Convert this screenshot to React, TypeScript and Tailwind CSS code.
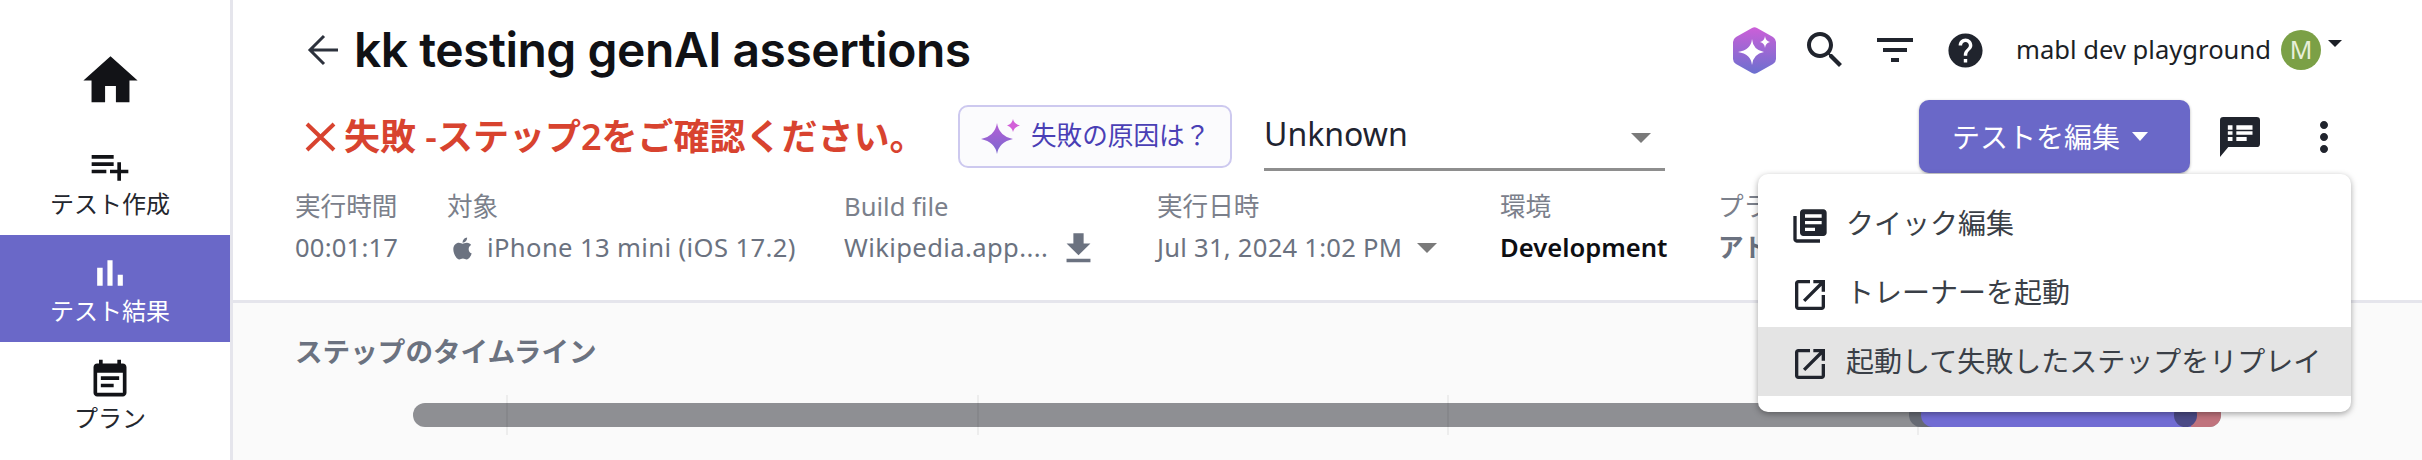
import { FaApple } from 'react-icons/fa';

const FONT = "font-['Noto_Sans','Noto_Sans_CJK_JP',sans-serif]";

function MuiIcon({ d, size, className = '' }: { d: string; size: number; className?: string }) {
  return (
    <svg width={size} height={size} viewBox="0 0 24 24" fill="currentColor" className={`shrink-0 ${className}`}>
      <path d={d} />
    </svg>
  );
}

const ICONS = {
  home: 'M10 20v-6h4v6h5v-8h3L12 3 2 12h3v8z',
  playlistAdd: 'M14 10H2v2h12v-2zm0-4H2v2h12V6zm4 8v-4h-2v4h-4v2h4v4h2v-4h4v-2h-4zM2 16h8v-2H2v2z',
  barChart: 'M5 9.2h3V19H5zM10.6 5h2.8v14h-2.8zm5.6 8H19v6h-2.8z',
  eventNote:
    'M17 10H7v2h10v-2zm2-7h-1V1h-2v2H8V1H6v2H5c-1.11 0-1.99.9-1.99 2L3 19c0 1.1.89 2 2 2h14c1.1 0 2-.9 2-2V5c0-1.1-.9-2-2-2zm0 16H5V8h14v11zm-5-5H7v2h7v-2z',
  search:
    'M15.5 14h-.79l-.28-.27C15.41 12.59 16 11.11 16 9.5 16 5.91 13.09 3 9.5 3S3 5.91 3 9.5 5.91 16 9.5 16c1.61 0 3.09-.59 4.23-1.57l.27.28v.79l5 4.99L20.49 19l-4.99-5zm-6 0C7.01 14 5 11.99 5 9.5S7.01 5 9.5 5 14 7.01 14 9.5 11.99 14 9.5 14z',
  filter: 'M10 18h4v-2h-4v2zM3 6v2h18V6H3zm3 7h12v-2H6v2z',
  help: 'M12 2C6.48 2 2 6.48 2 12s4.48 10 10 10 10-4.48 10-10S17.52 2 12 2zm1 17h-2v-2h2v2zm2.07-7.75l-.9.92C13.45 12.9 13 13.5 13 15h-2v-.5c0-1.1.45-2.1 1.17-2.83l1.24-1.26c.37-.36.59-.86.59-1.41 0-1.1-.9-2-2-2s-2 .9-2 2H8c0-2.21 1.79-4 4-4s4 1.79 4 4c0 .88-.36 1.68-.93 2.25z',
  moreVert:
    'M12 8c1.1 0 2-.9 2-2s-.9-2-2-2-2 .9-2 2 .9 2 2 2zm0 2c-1.1 0-2 .9-2 2s.9 2 2 2 2-.9 2-2-.9-2-2-2zm0 6c-1.1 0-2 .9-2 2s.9 2 2 2 2-.9 2-2-.9-2-2-2z',
  download: 'M19 9h-4V3H9v6H5l7 7 7-7zM5 18v2h14v-2H5z',
  library:
    'M4 6H2v14c0 1.1.9 2 2 2h14v-2H4V6zm16-4H8c-1.1 0-2 .9-2 2v12c0 1.1.9 2 2 2h12c1.1 0 2-.9 2-2V4c0-1.1-.9-2-2-2zm-1 9H9V9h10v2zm-4 4H9v-2h6v2zm4-8H9V5h10v2z',
  openNew:
    'M19 19H5V5h7V3H5c-1.11 0-2 .9-2 2v14c0 1.1.89 2 2 2h14c1.1 0 2-.9 2-2v-7h-2v7zM14 3v2h3.59l-9.83 9.83 1.41 1.41L19 6.41V10h2V3h-7z',
};

function Triangle({ className }: { className: string }) {
  return <span className={`shrink-0 border-x-transparent border-b-0 border-solid ${className}`} />;
}

function Sidebar() {
  return (
    <aside className="flex w-[233px] shrink-0 flex-col border-r-[3px] border-[#e5e5ec] bg-white text-[24px] leading-[24px] text-[#24272e]">
      <div className="flex h-[144px] flex-col items-center pr-[10px] pt-[48px]">
        <MuiIcon d={ICONS.home} size={65} className="text-[#121317]" />
      </div>
      <div className="flex h-[91px] flex-col items-center gap-1 pr-[10px]">
        <MuiIcon d={ICONS.playlistAdd} size={44} className="text-[#121317]" />
        <span>テスト作成</span>
      </div>
      <div className="flex h-[107px] flex-col items-center gap-1 bg-[#6a68c8] pr-[10px] pt-4 text-white">
        <MuiIcon d={ICONS.barChart} size={44} />
        <span>テスト結果</span>
      </div>
      <div className="flex flex-col items-center gap-1 pr-[10px] pt-4">
        <MuiIcon d={ICONS.eventNote} size={44} className="text-[#121317]" />
        <span>プラン</span>
      </div>
    </aside>
  );
}

function HexLogo() {
  return (
    <svg width="43" height="47" viewBox="0 0 43 47" className="shrink-0">
      <defs>
        <linearGradient id="hex" x1="0" y1="0" x2="0" y2="1">
          <stop offset="0" stopColor="#cc5fd8" />
          <stop offset="1" stopColor="#6b70cf" />
        </linearGradient>
      </defs>
      <path d="M19 1 Q21.5 -0.5 24 1 L40 10 Q43 12 43 15 V32 Q43 35 40 37 L24 46 Q21.5 47.5 19 46 L3 37 Q0 35 0 32 V15 Q0 12 3 10 Z" fill="url(#hex)" />
      <path d="M19 12 Q20 23 31 25 Q20 27 19 38 Q18 27 5 25 Q18 23 19 12Z" fill="#fff" />
      <path d="M32 9 Q32.5 14 37 15 Q32.5 16 32 21 Q31.5 16 27 15 Q31.5 14 32 9Z" fill="#fff" />
    </svg>
  );
}

function Sparkles() {
  return (
    <svg width="40" height="36" viewBox="0 0 40 36" className="shrink-0">
      <defs>
        <linearGradient id="spark" x1="0" y1="0" x2="0" y2="1">
          <stop offset="0" stopColor="#b65fd6" />
          <stop offset="1" stopColor="#7a68cf" />
        </linearGradient>
      </defs>
      <path d="M16 4 Q18 17 32 20 Q18 23 16 35 Q14 23 0 20 Q14 17 16 4Z" fill="url(#spark)" />
      <path d="M32 0 Q33 5 39 6.5 Q33 8 32 13 Q31 8 26 6.5 Q31 5 32 0Z" fill="#d260d8" />
    </svg>
  );
}

function ChatList() {
  return (
    <svg width="40" height="40" viewBox="0 0 24 24" className="shrink-0">
      <path d="M2 0H22a2 2 0 0 1 2 2V16a2 2 0 0 1-2 2H5L0 24V2a2 2 0 0 1 2-2z" fill="#20242d" />
      <path d="M4.7 5H7.5V7.6H4.7zM9.8 5H19.5V7.6H9.8zM4.7 8.6H7.5V10.6H4.7zM9.8 8.6H19.5V10.6H9.8zM4.7 12H7.5V14.4H4.7zM9.8 12H16V14.4H9.8z" fill="#fff" />
    </svg>
  );
}

function EditMenu() {
  const items = [
    { icon: ICONS.library, label: 'クイック編集' },
    { icon: ICONS.openNew, label: 'トレーナーを起動' },
    { icon: ICONS.openNew, label: '起動して失敗したステップをリプレイ', active: true },
  ];
  return (
    <div className="absolute left-[-161px] top-[74px] z-10 flex h-[238px] w-[593px] flex-col rounded-[10px] bg-white py-[15px] shadow-[0_2px_6px_rgba(0,0,0,0.35)]">
      {items.map((item) => (
        <div
          key={item.label}
          className={`flex h-[69px] items-center gap-[16px] pl-[32px] text-[28px] text-[#3a3f47] ${item.active ? 'bg-[#e4e4e4]' : ''}`}
        >
          <MuiIcon d={item.icon} size={40} className="mt-[5px] text-[#20242d]" />
          <span className="-mt-[2px]">{item.label}</span>
        </div>
      ))}
    </div>
  );
}

function Meta() {
  return (
    <div className="flex h-[127px] pl-[62px] pt-4 text-[25.6px] leading-[36px] text-[#6b7280]">
      <div className="flex w-[152px] shrink-0 flex-col gap-[5px]">
        <span className="text-[#7b808b]">実行時間</span>
        <span className="tracking-[0.2px]">00:01:17</span>
      </div>
      <div className="flex w-[397px] shrink-0 flex-col gap-[5px]">
        <span className="text-[#7b808b]">対象</span>
        <span className="flex items-center gap-[12px] pl-[3px] tracking-[0.38px]">
          <FaApple size={25} />
          iPhone 13 mini (iOS 17.2)
        </span>
      </div>
      <div className="flex w-[313px] shrink-0 flex-col gap-[5px]">
        <span className="text-[#7b808b]">Build file</span>
        <span className="flex items-center gap-[10px] tracking-[0.38px]">
          Wikipedia.app....
          <MuiIcon d={ICONS.download} size={41} className="-my-1" />
        </span>
      </div>
      <div className="flex w-[343px] shrink-0 flex-col gap-[5px]">
        <span className="text-[#7b808b]">実行日時</span>
        <span className="flex items-center gap-[15px] tracking-[0.25px]">
          Jul 31, 2024 1:02 PM
          <Triangle className="border-x-[10px] border-t-[10px] border-t-[#7a7a7a]" />
        </span>
      </div>
      <div className="flex w-[219px] shrink-0 flex-col gap-[5px]">
        <span className="text-[#7b808b]">環境</span>
        <span className="font-semibold text-[#0d0e12]">Development</span>
      </div>
      <div className="-ml-px flex flex-col gap-[5px]">
        <span className="text-[#7b808b]">プラン</span>
        <span className="font-semibold">アドホック</span>
      </div>
    </div>
  );
}

function Timeline() {
  const ticks = [93, 564, 1034, 1504];
  return (
    <div className="flex-1 bg-[#fafafa] pl-[62px]">
      <h2 className="pt-[30px] text-[27.6px] font-semibold leading-[36px] text-[#6b7280]">ステップのタイムライン</h2>
      <div className="relative ml-[118px] mt-[34px] h-6 w-[1808px] rounded-xl bg-[#8e8f93]">
        {ticks.map((left) => (
          <span key={left} className="absolute -top-2 h-10 w-0.5 bg-black/5" style={{ left }} />
        ))}
        <span className="absolute left-[1496px] top-0 h-6 w-[60px] rounded-l-xl bg-[#666a74]" />
        <span className="absolute left-[1776px] top-0 h-6 w-8 rounded-r-xl bg-[#c0737d]" />
        <span className="absolute left-[1508px] top-0 h-6 w-[270px] rounded-l-xl bg-[#716cd3]" />
        <span className="absolute left-[1761px] top-0 h-6 w-[23px] rounded-xl bg-[#4b4a86]" />
      </div>
    </div>
  );
}

export default function App() {
  return (
    <div className={`flex h-[460px] w-[2422px] overflow-hidden bg-white ${FONT}`}>
      <Sidebar />
      <main className="flex min-w-0 flex-1 flex-col">
        <div className="flex h-[100px] shrink-0 items-center pl-[67px] pr-[80px]">
          <svg width="48" height="48" viewBox="0 0 24 24" fill="none" stroke="#2d323d" strokeWidth="1.5" className="shrink-0">
            <path d="M19 12H5M12 19l-7-7 7-7" />
          </svg>
          <h1 className="ml-[6px] font-['Inter',sans-serif] text-[48px] font-semibold tracking-[-0.5px] text-[#101115]">
            kk testing genAI assertions
          </h1>
          <div className="ml-auto flex items-center">
            <HexLogo />
            <MuiIcon d={ICONS.search} size={48} className="ml-[25px] text-[#20242d]" />
            <MuiIcon d={ICONS.filter} size={48} className="ml-[22px] text-[#20242d]" />
            <MuiIcon d={ICONS.help} size={41} className="ml-[26px] text-[#20242d]" />
            <span className="ml-[30px] text-[25.6px] text-[#1c1f26]">mabl dev playground</span>
            <span className="ml-[10px] flex h-10 w-10 items-center justify-center rounded-full bg-[#7ba046] text-[25px] text-[#e8efd9]">
              M
            </span>
            <Triangle className="mb-[14px] ml-[7px] border-x-[7px] border-t-[7px] border-t-[#1c1f26]" />
          </div>
        </div>

        <div className="flex h-[73px] shrink-0 items-center pl-[72px] pr-[74px]">
          <div className="flex w-[653px] shrink-0 items-center">
            <svg width="31" height="31" viewBox="0 0 31 31" stroke="#d8432f" strokeWidth="4" className="shrink-0">
              <path d="M2 3 29 29M29 3 2 29" />
            </svg>
            <span className="ml-[8px] text-[36px] font-semibold text-[#d8432f]">失敗 -ステップ2をご確認ください。</span>
          </div>
          <button className="flex h-[63px] w-[274px] shrink-0 items-center gap-[10px] rounded-[10px] border-2 border-[#cdc9ef] bg-[#fbfbfd] pl-[21px] text-[25.6px] text-[#4a3fb5]">
            <Sparkles />
            失敗の原因は？
          </button>
          <div className="ml-[32px] mb-[-6px] flex h-[62px] w-[401px] shrink-0 items-center border-b-[3px] border-[#8e8e8e] pr-[14px] text-[32px] text-[#1f2430]">
            <span className="-mt-[8px]">Unknown</span>
            <Triangle className="ml-auto border-x-[10px] border-t-[10px] border-t-[#7a7a7a]" />
          </div>
          <div className="relative ml-auto shrink-0">
            <button className="flex h-[73px] w-[271px] items-center gap-[12px] rounded-[10px] bg-[#6a68c8] pl-[33px] text-[28px] text-white shadow-[0_1px_3px_rgba(0,0,0,0.3)]">
              テストを編集
              <Triangle className="border-x-[8px] border-t-[9px] border-t-white" />
            </button>
            <EditMenu />
          </div>
          <div className="ml-[30px] shrink-0">
            <ChatList />
          </div>
          <MuiIcon d={ICONS.moreVert} size={48} className="ml-[40px] text-[#20242d]" />
        </div>

        <Meta />
        <div className="flex min-h-0 flex-1 flex-col border-t-[3px] border-[#e5e5ec]">
          <Timeline />
        </div>
      </main>
    </div>
  );
}
